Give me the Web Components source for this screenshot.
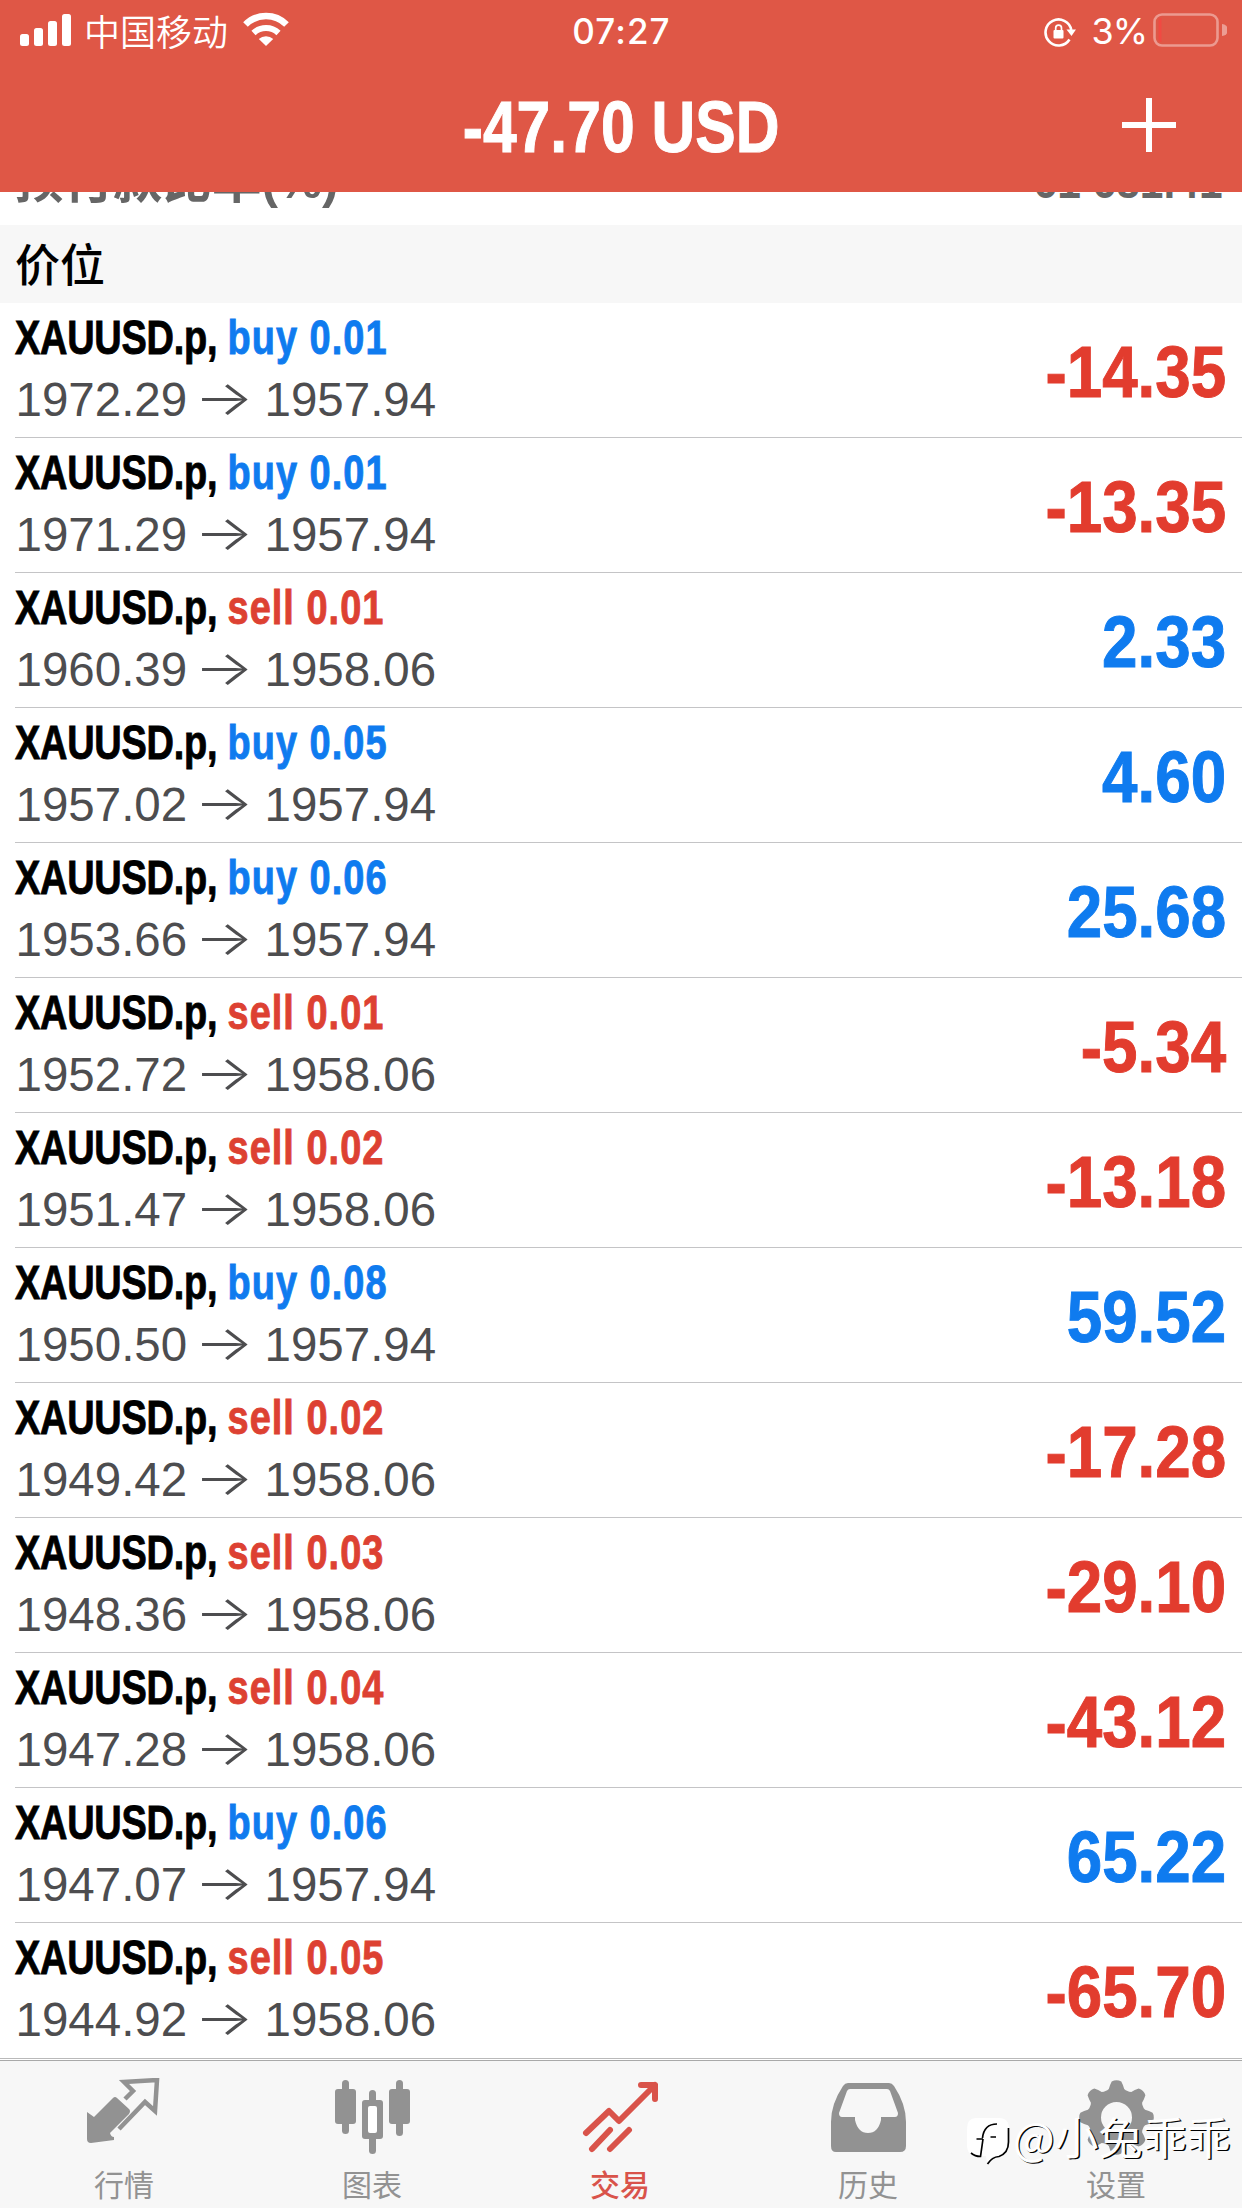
<!DOCTYPE html>
<html lang="zh-CN">
<head>
<meta charset="utf-8">
<title>交易</title>
<style>
html,body{margin:0;padding:0;background:#fff}
body{width:1242px;height:2208px;overflow:hidden;font-family:"Liberation Sans","Noto Sans CJK SC",sans-serif}
</style>
</head>
<body>
<trade-app></trade-app>
<script>
const define=(name,html,init)=>{
  const t=document.createElement('template');t.innerHTML=html;
  customElements.define(name,class extends HTMLElement{
    constructor(){super();this.attachShadow({mode:'open'}).append(t.content.cloneNode(true));}
    connectedCallback(){if(init)init(this,this.shadowRoot);}
  });
};

define('status-bar',`<style>
:host{display:flex;height:62px;padding:0 15px 0 20px;color:#fff;box-sizing:border-box}
.l,.r{flex:1 1 0;display:flex;align-items:flex-start}
.r{justify-content:flex-end}
svg{display:block;flex:none}
.sig{margin-top:14px}.carrier{font:350 36px/52px "Noto Sans CJK SC",sans-serif;margin:4px 0 0 12px;white-space:nowrap}
.wifi{margin:12px 0 0 15px}
.time{font:500 35px/40px Inter,sans-serif;margin:11px 4px 0 0;letter-spacing:1.1px}
.lock{margin-top:17px}.pct{font:400 36px/40px Inter,sans-serif;margin:11px 0 0 15px;letter-spacing:-1px}
.bat{margin:13px 0 0 6px}
</style>
<div class="l">
<svg class="sig" width="52" height="32" fill="#fff"><rect y="20" width="9" height="12" rx="2.5"/><rect x="14" y="14" width="9" height="18" rx="2.5"/><rect x="28" y="7" width="9" height="25" rx="2.5"/><rect x="42" width="9" height="32" rx="2.5"/></svg>
<span class="carrier">中国移动</span>
<svg class="wifi" width="46" height="34" viewBox="0 0 46 34" fill="none" stroke="#fff"><path d="M2.5 12.5A29 29 0 0 1 43.500 12.500" stroke-width="6.500"/><path d="M10.500 21A18 18 0 0 1 35.500 21" stroke-width="6"/><path d="M23 34L15.800 27A10.500 10.500 0 0 1 30.200 27Z" fill="#fff" stroke="none"/></svg>
</div>
<span class="time">07:27</span>
<div class="r">
<svg class="lock" width="32" height="30" viewBox="0 0 32 30" fill="none" stroke="#fff" stroke-width="2.600"><path d="M25.500 22.500A13 13 0 1 1 27.300 13"/><path d="M22.500 12.500H32L27.500 19Z" fill="#fff" stroke="none"/><rect x="9.500" y="13" width="10" height="8.500" rx="1" fill="#fff" stroke="none"/><path d="M11.700 13.500V11a2.900 2.900 0 0 1 5.800 0V13.500" stroke-width="1.700"/></svg>
<span class="pct">3%</span>
<svg class="bat" width="74" height="34" fill="none"><rect x="1.500" y="1.500" width="63" height="31" rx="7.500" stroke="#fff" stroke-opacity=".4" stroke-width="2.600"/><path d="M69 11a6 6 0 0 1 0 12Z" fill="#fff" fill-opacity=".42"/><path d="M5.500 8.500q0-3.500 3-3.500v24q-3 0-3-3.500Z" fill="#f04a42"/></svg>
</div>`);

define('nav-bar',`<style>
:host{display:grid;grid-template-columns:1fr auto 1fr;height:130px;color:#fff}
.t{grid-column:2;font:700 72px/80px "Liberation Sans",sans-serif;margin-top:25px;white-space:nowrap;transform:scaleX(.842);-webkit-text-stroke:1px}
svg{justify-self:end;margin:36px 66px 0 0}
</style><span class="t"><slot></slot></span>
<svg width="54" height="54" stroke="#fff" stroke-width="6"><path d="M27 0V54M0 27H54"/></svg>`);

define('summary-row',`<style>
:host{display:flex;flex-direction:column;justify-content:flex-end;height:33px;overflow:hidden;background:#fff;color:#666}
div{display:flex;justify-content:space-between;align-items:baseline;flex:none;height:60px;padding:0 19px 0 14px;font:700 49.500px/60px "Liberation Sans","Noto Sans CJK SC",sans-serif;margin-bottom:14px}
.v{font-size:48px;transform:scaleX(.885);transform-origin:right}
</style><div><span class="k"><slot name="label"></slot></span><span class="v"><slot name="value"></slot></span></div>`);

define('section-title',`<style>
:host{display:flex;align-items:center;height:78px;padding:0 0 3px 15px;background:#f7f7f7;color:#000;font:500 45px/75px "Noto Sans CJK SC",sans-serif;box-sizing:border-box}
</style><slot></slot>`);

define('position-row',`<style>
:host{display:flex;height:135px;justify-content:space-between;margin-left:15px;padding-right:15.500px;box-sizing:border-box;border-bottom:1px solid #c4c4c6}
.h{font:700 48px/56px "Liberation Sans",sans-serif;color:#000;margin-top:7px;white-space:pre;transform:scaleX(.79);transform-origin:left;letter-spacing:-.3px;-webkit-text-stroke:.9px}
.side{letter-spacing:1.300px}
.p{display:flex;align-items:baseline;font:400 47.500px/56px "Liberation Sans",sans-serif;color:#4d4d4f;margin-top:6px;white-space:pre}
.a{margin-left:.5px}
.p i{font:300 48px/54px Inter,sans-serif;margin:0 17.500px 0 14px;transform:translateY(-1px) scaleX(1.3)}
.pl{font:700 72px/80px "Liberation Sans",sans-serif;margin-top:29px;transform:scaleX(.885);transform-origin:right;-webkit-text-stroke:1px}
.blue{color:#0f7bef}.red{color:#e23c2e}.side.red{color:#dd4132}
</style><div><div class="h">XAUUSD.p, <span class="side"></span></div><div class="p"><span class="a"></span><i>→</i><span class="b"></span></div></div><div class="pl"></div>`,
(el,r)=>{
  const [side,lot,a,b,pl]=el.getAttribute('deal').split(' ');
  const s=r.querySelector('.side');s.textContent=side+' '+lot;s.classList.add(side==='buy'?'blue':'red');
  r.querySelector('.a').textContent=a;r.querySelector('.b').textContent=b;
  const p=r.querySelector('.pl');p.textContent=pl;p.classList.add(pl[0]==='-'?'red':'blue');
});

define('tab-item',`<style>
:host{display:flex;flex-direction:column;align-items:center;color:#929292;flex:1 1 0}
:host([active]){color:#d9534a}
.i{height:78px;margin-top:17px}
span{font:400 30px/34px "Noto Sans CJK SC",sans-serif;margin-top:10px}
:host([active]) span{font-weight:500}
</style><div class="i"><slot name="icon"></slot></div><span><slot></slot></span>`);

define('tab-bar',`<style>
:host{display:flex;height:148px;padding-right:2px;background:#f7f7f7;border-top:1px solid #a9a9a9;box-sizing:border-box}
svg{display:block}
</style>
<tab-item><svg slot="icon" width="76" height="78" viewBox="0 0 76 78" fill="currentColor"><path d="M1 61V34l7 5 19-19q2-2 4 0l12 11q2 2 0 5L24 55q1 4 4 4v3L5 65q-4 0-4-4Z"/><path d="M39 21l8-8-9-9L71 2 69 33 59 24 33 51" fill="none" stroke="currentColor" stroke-width="4.500"/></svg>行情</tab-item>
<tab-item><svg slot="icon" width="76" height="78" viewBox="0 0 76 78" fill="currentColor"><rect x="1" y="11" width="21" height="35" rx="3"/><rect x="8" y="2" width="7" height="54" rx="3.500"/><rect x="55" y="11" width="21" height="35" rx="3"/><rect x="62" y="2" width="7" height="56" rx="3.500"/><rect x="35" y="12" width="7" height="64" rx="3.500"/><rect x="28" y="22" width="21" height="39" rx="3"/><rect x="34" y="28" width="9" height="27" rx="2" fill="#fff"/></svg>图表</tab-item>
<tab-item active><svg slot="icon" width="76" height="78" viewBox="0 0 76 78" fill="none" stroke="currentColor" stroke-width="6" stroke-linecap="round" stroke-linejoin="round"><path d="M4 55L27 33 37 43 73 7M59 7H73V21M10 71L28 52M28 71L47 52"/></svg>交易</tab-item>
<tab-item><svg slot="icon" width="76" height="78" viewBox="0 0 76 78"><path fill="currentColor" fill-rule="evenodd" d="M18 5H59Q62 5 64 8Q76 26 76 44V68Q76 74 70 74H6Q1 74 1 68V44Q1 26 13 8Q15 5 18 5ZM20 11Q18 11 17 13L9 35Q9 39 12 39H25V42Q28 55 38 55Q48 55 51 42V39H65Q68 39 68 35L60 13Q59 11 57 11Z"/></svg>历史</tab-item>
<tab-item><svg slot="icon" class="gear" width="76" height="78" viewBox="0 0 76 78"></svg>设置</tab-item>`,
(el,r)=>{
  const pts=[];
  for(let i=0;i<96;i++){const a=i/96*2*Math.PI-Math.PI/2,c=Math.cos(a*8+Math.PI*4);
    const rad=33+4.500*Math.tanh(2*c);pts.push((38.500+rad*Math.cos(a)).toFixed(1)+' '+(39.500+rad*Math.sin(a)).toFixed(1));}
  r.querySelector('.gear').innerHTML='<path fill="currentColor" fill-rule="evenodd" d="M'+pts.join('L')+'ZM23 39.500a15.500 15.500 0 1 0 31 0a15.500 15.500 0 1 0-31 0Z"/>';
});

define('author-mark',`<style>
:host{position:absolute;left:966px;top:2115px;display:flex;align-items:flex-start;color:#fff}
span{font:400 44px/44px "Noto Sans CJK SC",sans-serif;text-shadow:1.300px 1.300px 0 #000;white-space:nowrap;margin:-1px 0 0 -1px}
svg{display:block}
</style><svg width="48" height="54" viewBox="0 0 48 54"><path d="M10 3H33Q43 3 43 14V27Q43 39 32 41H27L21 48 20 41H12Q1 41 1 30V14Q1 3 10 3Z" fill="#fff"/><path d="M42.500 13V27Q42.500 38 33 41.500Q26 42 21.500 49M5 38Q9 41.500 14.500 41.500L17 24M10.500 24H17M16.500 23Q18 9 31 9M24.500 22H30" fill="none" stroke="#000" stroke-width="1.700"/></svg><span>@小兔乖乖</span>`);

define('trade-app',`<style>
:host{display:flex;flex-direction:column;width:1242px;height:2208px;position:relative;overflow:hidden;background:#fff}
header{background:#df5746}
main{flex:1 1 auto;min-height:0;overflow:hidden;border-bottom:1px solid #b9b9b9;margin-bottom:1px}
position-row:last-child{border-bottom-color:transparent}
</style>
<header><status-bar></status-bar><nav-bar>-47.70 USD</nav-bar></header>
<main><summary-row><span slot="label">预付款比率(%)</span><span slot="value">61 681.41</span></summary-row>
<section-title>价位</section-title><section></section></main>
<tab-bar></tab-bar><author-mark></author-mark>`,
(el,r)=>{
  const rows=['buy 0.01 1972.29 1957.94 -14.35','buy 0.01 1971.29 1957.94 -13.35','sell 0.01 1960.39 1958.06 2.33','buy 0.05 1957.02 1957.94 4.60','buy 0.06 1953.66 1957.94 25.68','sell 0.01 1952.72 1958.06 -5.34','sell 0.02 1951.47 1958.06 -13.18','buy 0.08 1950.50 1957.94 59.52','sell 0.02 1949.42 1958.06 -17.28','sell 0.03 1948.36 1958.06 -29.10','sell 0.04 1947.28 1958.06 -43.12','buy 0.06 1947.07 1957.94 65.22','sell 0.05 1944.92 1958.06 -65.70'];
  const s=r.querySelector('section');
  for(const d of rows){const e=document.createElement('position-row');e.setAttribute('deal',d);s.append(e);}
});
</script>
</body>
</html>
